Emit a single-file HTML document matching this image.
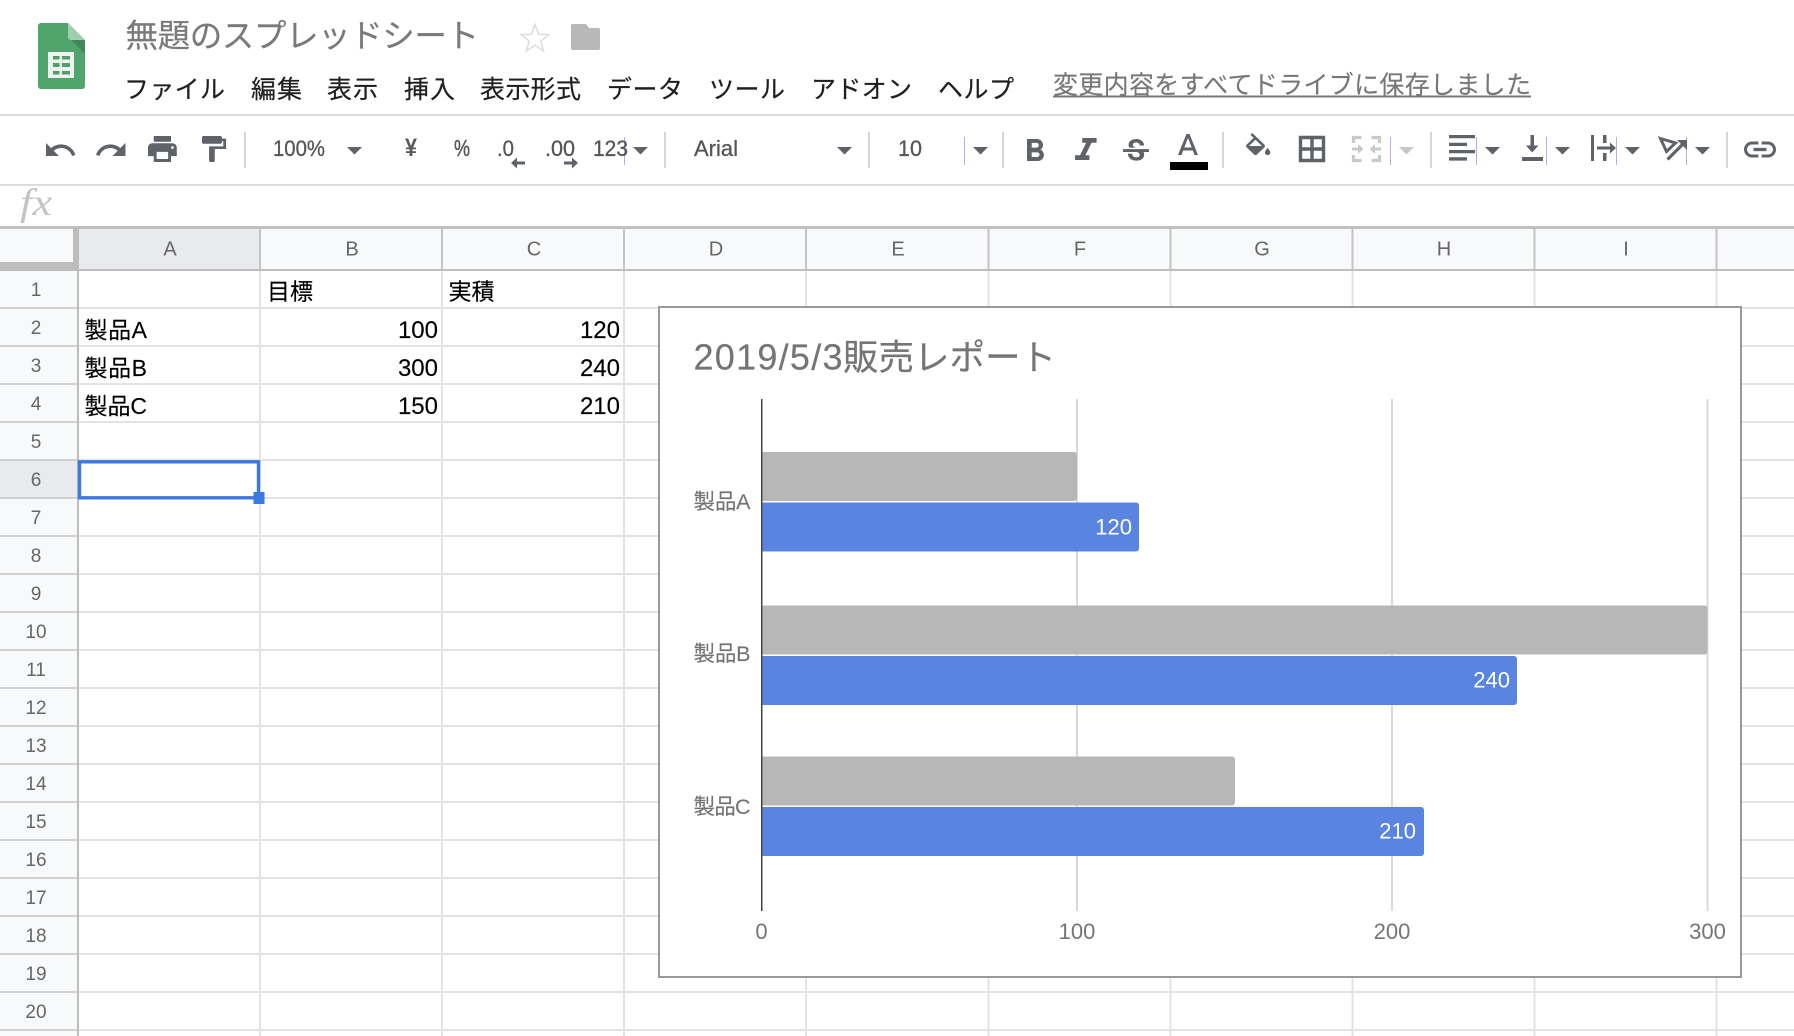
<!DOCTYPE html>
<html lang="ja">
<head>
<meta charset="utf-8">
<title>無題のスプレッドシート</title>
<style>
html,body{margin:0;padding:0;background:#fff;width:1794px;height:1036px;overflow:hidden}
svg{display:block;font-family:"Liberation Sans","Noto Sans CJK JP",sans-serif}
.m{font-size:25px;fill:#1f1f1f;stroke:#1f1f1f;stroke-width:.2px}
.t{font-size:22px;fill:#555;stroke:#555;stroke-width:.3px}
.c{font-size:20px;fill:#666;text-anchor:middle}
.r{font-size:19px;fill:#666;text-anchor:middle}
.d{font-size:23px;fill:#000;stroke:#000;stroke-width:.15px}
.n{font-size:24px;fill:#000;text-anchor:end;stroke:#000;stroke-width:.15px}
.l{font-size:21.5px;fill:#757575;stroke:#757575;stroke-width:.15px}
.a{font-size:22px;fill:#757575;text-anchor:middle}
.v{font-size:22px;fill:#fff;text-anchor:end}
.i{fill:#5f6368}
</style>
</head>
<body>
<svg xmlns="http://www.w3.org/2000/svg" width="1794" height="1036" viewBox="0 0 1794 1036">
<rect width="1794" height="1036" fill="#fff"/>

<!-- App icon -->
<path d="M41 23H68L85 40V86a3 3 0 0 1-3 3H41a3 3 0 0 1-3-3V26a3 3 0 0 1 3-3z" fill="#50a56c"/>
<path d="M68 37L85 54V40H71a3 3 0 0 1-3-3z" fill="#41875a"/>
<path d="M68 23L85 40H71a3 3 0 0 1-3-3z" fill="#9fcfae"/>
<rect x="48" y="52" width="26" height="26" fill="#eef3ef"/>
<path d="M53 56h6.500v3.500h-6.500zM62 56h8v3.500h-8zM53 63h6.500v4h-6.500zM62 63h8v4h-8zM53 71h6.500v3.500h-6.500zM62 71h8v3.500h-8z" fill="#4c9f68"/>

<!-- Title -->
<text x="125.500" y="47" font-size="32.500" fill="#7a7a7a" stroke="#7a7a7a" stroke-width=".2" textLength="353.500">無題のスプレッドシート</text>
<path d="M535 24.500l3.600 9.700 10.200.5-8 6.400 2.800 9.900-8.600-5.700-8.600 5.700 2.800-9.900-8-6.400 10.200-.5z" fill="#fff" stroke="#dcdcdc" stroke-width="1.500"/>
<path d="M573 24h13l3 4h9a2 2 0 0 1 2 2v18a2 2 0 0 1-2 2H573a2 2 0 0 1-2-2V26a2 2 0 0 1 2-2z" fill="#b8b8b8"/>

<!-- Menu -->
<text class="m" x="124" y="98" textLength="101">ファイル</text>
<text class="m" x="251" y="98" textLength="51">編集</text>
<text class="m" x="327" y="98" textLength="51">表示</text>
<text class="m" x="404" y="98" textLength="51">挿入</text>
<text class="m" x="480" y="98" textLength="101">表示形式</text>
<text class="m" x="607" y="98" textLength="76">データ</text>
<text class="m" x="709" y="98" textLength="76">ツール</text>
<text class="m" x="811" y="98" textLength="101">アドオン</text>
<text class="m" x="938" y="98" textLength="76">ヘルプ</text>
<text x="1053" y="93.500" font-size="25" fill="#777" stroke="#777" stroke-width=".15" textLength="478">変更内容をすべてドライブに保存しました</text>
<rect x="1053" y="95.500" width="478" height="2" fill="#777"/>

<!-- Bars -->
<rect x="0" y="114" width="1794" height="2" fill="#dadce0"/>
<rect x="0" y="184" width="1794" height="2" fill="#dadce0"/>

<!-- Toolbar separators -->
<path d="M245 132v36M665 132v36M869 132v36M1003 132v36M1223 132v36M1431 132v36M1727 132v36" stroke="#d6d6d9" stroke-width="2" fill="none"/>
<!-- purple hairlines -->
<path d="M624.500 137v28M964.500 137v28M1390.500 137v28M1476.500 137v28M1546.500 137v28M1616.500 137v28M1686.500 137v28" stroke="#c3a6ea" stroke-width="1" fill="none"/>

<!-- Undo / redo / print / paint -->
<path class="i" transform="translate(43.100 132.900) scale(1.44)" d="M12.500 8c-2.650 0-5.050.99-6.900 2.600L2 7v9h9l-3.620-3.620c1.390-1.160 3.160-1.880 5.120-1.880 3.540 0 6.550 2.310 7.600 5.500l2.370-.78C21.080 11.030 17.150 8 12.500 8z"/>
<path class="i" transform="translate(93.800 132.900) scale(1.44)" d="M18.400 10.600C16.550 8.990 14.150 8 11.500 8c-4.650 0-8.580 3.030-9.960 7.220L3.900 16c1.050-3.190 4.050-5.500 7.600-5.500 1.950 0 3.730.72 5.120 1.880L13 16h9V7l-3.600 3.600z"/>
<path class="i" transform="translate(145.100 131.700) scale(1.44)" d="M19 8H5c-1.660 0-3 1.340-3 3v6h4v4h12v-4h4v-6c0-1.660-1.340-3-3-3zm-3 11H8v-5h8v5zm3-7c-.55 0-1-.45-1-1s.45-1 1-1 1 .45 1 1-.45 1-1 1zm-1-9H6v4h12V3z"/>
<path class="i" transform="translate(196.300 133.400) scale(1.42 1.3)" d="M18 4V3c0-.55-.45-1-1-1H5c-.55 0-1 .45-1 1v4c0 .55.45 1 1 1h12c.55 0 1-.45 1-1V6h1v4H9v11c0 .55.45 1 1 1h2c.55 0 1-.45 1-1v-9h8V4h-3z"/>

<!-- Toolbar text -->
<text class="t" x="273" y="156" textLength="52" lengthAdjust="spacingAndGlyphs">100%</text>
<text x="405" y="156" font-size="25" font-weight="bold" fill="#5a5a5a" textLength="12" lengthAdjust="spacingAndGlyphs">¥</text>
<text x="454" y="156" font-size="23" fill="#5a5a5a" stroke="#5a5a5a" stroke-width=".5" textLength="16" lengthAdjust="spacingAndGlyphs">%</text>
<text class="t" x="497" y="156" textLength="17" lengthAdjust="spacingAndGlyphs">.0</text>
<text class="t" x="545" y="156" textLength="30" lengthAdjust="spacingAndGlyphs">.00</text>
<text class="t" x="593" y="156" textLength="35" lengthAdjust="spacingAndGlyphs">123</text>
<text class="t" x="694" y="156" textLength="44" lengthAdjust="spacingAndGlyphs">Arial</text>
<text class="t" x="898" y="156" textLength="24" lengthAdjust="spacingAndGlyphs">10</text>
<path class="i" d="M511 163l6-5.500v4h8v3h-8v4zM578 163l-6-5.500v4h-8v3h8v4z"/>

<!-- Dropdown arrows -->
<path class="i" d="M347 147h15l-7.500 7.500zM633 147h15l-7.500 7.500zM837 147h15l-7.500 7.500zM973 147h15l-7.500 7.500zM1485 147h15l-7.500 7.500zM1555 147h15l-7.500 7.500zM1625 147h15l-7.500 7.500zM1695 147h15l-7.500 7.500z"/>
<path d="M1399 147h15l-7.500 7.500z" fill="#c8c8c8"/>

<!-- B I S A -->
<path class="i" transform="translate(1016 132.700) scale(1.57)" d="M15.600 10.790c.97-.67 1.650-1.770 1.650-2.790 0-2.260-1.750-4-4-4H7v14h7.040c2.090 0 3.710-1.700 3.710-3.790 0-1.520-.86-2.820-2.150-3.420zM10 6.500h3c.83 0 1.500.67 1.500 1.500s-.67 1.500-1.500 1.500h-3v-3zm3.500 9H10v-3h3.500c.83 0 1.500.67 1.500 1.500s-.67 1.500-1.500 1.500z"/>
<path class="i" transform="translate(1064.200 131.700) scale(1.8 1.57)" d="M10 4v3h2.210l-3.420 8H6v3h8v-3h-2.210l3.420-8H18V4z"/>
<path class="i" transform="translate(1118.700 134.700) scale(1.44)" d="M6.850 7.080C6.850 4.370 9.450 3 12.240 3c1.640 0 3 .49 3.900 1.280.77.65 1.460 1.730 1.460 3.240h-3.010c0-.31-.05-.59-.15-.85-.29-.86-1.200-1.280-2.250-1.280-1.860 0-2.340 1.020-2.340 1.700 0 .48.25.88.74 1.210.38.25.77.48 1.410.7H7.390c-.21-.34-.54-.89-.54-1.920zM21 12v-2H3v2h9.620c1.150.45 1.960.75 1.960 1.970 0 1-.81 1.670-2.280 1.670-1.540 0-2.930-.54-2.930-2.510H6.400c0 .55.08 1.130.24 1.580.81 2.290 3.220 3.300 5.670 3.300 2.350 0 5.380-.92 5.380-4.340 0-.66-.13-1.300-.44-1.670H21z"/>
<path class="i" transform="translate(1169.500 129.500) scale(1.54 1.5)" d="M11 3L5.500 17h2.250l1.120-3h6.250l1.120 3h2.250L13 3h-2zm-1.380 9L12 5.670 14.380 12H9.620z"/>
<rect x="1170" y="162" width="38" height="8" fill="#000"/>

<!-- Fill -->
<path class="i" transform="translate(1242 133) scale(1.35 1.3)" d="M16.560 8.940L7.620 0 6.210 1.410l2.380 2.380-5.150 5.150c-.59.59-.59 1.540 0 2.120l5.500 5.500c.29.29.68.44 1.060.44s.77-.15 1.060-.44l5.500-5.500c.59-.58.59-1.530 0-2.120zM5.210 10L10 5.210 14.790 10H5.210zM19 11.500s-2 2.170-2 3.500c0 1.100.9 2 2 2s2-.9 2-2c0-1.330-2-3.500-2-3.500z"/>
<!-- Borders -->
<path d="M1300.500 137.500h23v23h-23zM1312 137.500v23M1300.500 149h23" fill="none" stroke="#5f6368" stroke-width="3.400"/>
<!-- Merge -->
<path d="M1353.500 143v-5.500h8M1379.500 143v-5.500h-8M1353.500 155v5.500h8M1379.500 155v5.500h-8" fill="none" stroke="#c9c9c9" stroke-width="3.200"/>
<path d="M1352 147.500h6v-3.500l5.500 5-5.500 5v-3.500h-6zM1381 147.500h-6v-3.500l-5.500 5 5.500 5v-3.500h6z" fill="#c9c9c9"/>
<!-- Align -->
<path class="i" d="M1449 135h26v3.300h-26zM1449 142.700h18v3.300h-18zM1449 150h26v3.300h-26zM1449 157.300h18v3.300h-18z"/>
<!-- V-align -->
<path class="i" d="M1530.500 135h3.500v10.500h4.500l-6.300 7-6.300-7h4.600zM1522 157h21v4h-21z"/>
<!-- Wrap -->
<path class="i" d="M1591 135h3v26h-3zM1603 135h3.500v8h-3.500zM1603 153h3.500v8h-3.500zM1597 146.500h13v-4l6 5.500-6 5.500v-4h-13z"/>
<!-- Rotate -->
<path d="M1660.500 138.500l15 4.500-9 8.500z" fill="none" stroke="#5f6368" stroke-width="3"/>
<path d="M1667.500 159.500l17-17" fill="none" stroke="#5f6368" stroke-width="3.200"/>
<path class="i" d="M1687 140v10l-3-3-4-4-3-3z"/>
<!-- Link -->
<path class="i" transform="translate(1740.800 130.300) scale(1.6)" d="M3.900 12c0-1.710 1.390-3.100 3.100-3.100h4V7H7c-2.760 0-5 2.240-5 5s2.240 5 5 5h4v-1.900H7c-1.710 0-3.100-1.390-3.100-3.100zM8 13h8v-2H8v2zm9-6h-4v1.900h4c1.710 0 3.100 1.390 3.100 3.100s-1.390 3.100-3.100 3.100h-4V17h4c2.760 0 5-2.240 5-5s-2.240-5-5-5z"/>

<!-- fx -->
<text x="20" y="215" font-family="'Liberation Serif',serif" font-style="italic" font-size="38" fill="#c4c4c4" textLength="32" lengthAdjust="spacingAndGlyphs">fx</text>

<!-- Header backgrounds -->
<rect x="0" y="228" width="1794" height="42" fill="#f8f9fa"/>
<rect x="0" y="270" width="78" height="766" fill="#f8f9fa"/>
<rect x="79" y="228" width="181" height="41" fill="#e8eaed"/>
<rect x="0" y="460" width="78" height="38" fill="#e8eaed"/>

<!-- Grid -->
<path d="M79 308H1794M79 346H1794M79 384H1794M79 422H1794M79 460H1794M79 498H1794M79 536H1794M79 574H1794M79 612H1794M79 650H1794M79 688H1794M79 726H1794M79 764H1794M79 802H1794M79 840H1794M79 878H1794M79 916H1794M79 954H1794M79 992H1794M79 1030H1794" stroke="#e2e3e3" stroke-width="2" fill="none"/>
<path d="M260 271V1036M442 271V1036M624 271V1036M806 271V1036M988.500 271V1036M1170.500 271V1036M1352.500 271V1036M1534.500 271V1036M1716.500 271V1036" stroke="#e2e3e3" stroke-width="2" fill="none"/>
<path d="M0 308H78M0 346H78M0 384H78M0 422H78M0 460H78M0 498H78M0 536H78M0 574H78M0 612H78M0 650H78M0 688H78M0 726H78M0 764H78M0 802H78M0 840H78M0 878H78M0 916H78M0 954H78M0 992H78M0 1030H78" stroke="#c4c4c4" stroke-width="1.500" fill="none"/>
<path d="M260 228V270M442 228V270M624 228V270M806 228V270M988.500 228V270M1170.500 228V270M1352.500 228V270M1534.500 228V270M1716.500 228V270" stroke="#c4c4c4" stroke-width="2" fill="none"/>
<rect x="0" y="226" width="1794" height="3" fill="#c0c0c0"/>
<rect x="78" y="269" width="1716" height="2" fill="#c0c0c0"/>
<rect x="77" y="271" width="2" height="765" fill="#bdbdbd"/>
<rect x="73" y="228" width="6" height="43" fill="#bdbdbd"/>
<rect x="0" y="262" width="79" height="9" fill="#bdbdbd"/>

<!-- Column letters -->
<text class="c" x="170" y="255.500">A</text>
<text class="c" x="352" y="255.500">B</text>
<text class="c" x="534" y="255.500">C</text>
<text class="c" x="716" y="255.500">D</text>
<text class="c" x="898" y="255.500">E</text>
<text class="c" x="1080" y="255.500">F</text>
<text class="c" x="1262" y="255.500">G</text>
<text class="c" x="1444" y="255.500">H</text>
<text class="c" x="1626" y="255.500">I</text>

<!-- Row numbers -->
<text class="r" x="36" y="296">1</text>
<text class="r" x="36" y="334">2</text>
<text class="r" x="36" y="372">3</text>
<text class="r" x="36" y="410">4</text>
<text class="r" x="36" y="448">5</text>
<text class="r" x="36" y="486">6</text>
<text class="r" x="36" y="524">7</text>
<text class="r" x="36" y="562">8</text>
<text class="r" x="36" y="600">9</text>
<text class="r" x="36" y="638">10</text>
<text class="r" x="36" y="676">11</text>
<text class="r" x="36" y="714">12</text>
<text class="r" x="36" y="752">13</text>
<text class="r" x="36" y="790">14</text>
<text class="r" x="36" y="828">15</text>
<text class="r" x="36" y="866">16</text>
<text class="r" x="36" y="904">17</text>
<text class="r" x="36" y="942">18</text>
<text class="r" x="36" y="980">19</text>
<text class="r" x="36" y="1018">20</text>

<!-- Cells -->
<text class="d" x="267" y="299.500">目標</text>
<text class="d" x="448.500" y="299.500">実積</text>
<text class="d" x="84.500" y="338" textLength="62.500">製品A</text>
<text class="d" x="84.500" y="376" textLength="62.500">製品B</text>
<text class="d" x="84.500" y="414" textLength="62.500">製品C</text>
<text class="n" x="438" y="338">100</text>
<text class="n" x="438" y="376">300</text>
<text class="n" x="438" y="414">150</text>
<text class="n" x="620" y="338">120</text>
<text class="n" x="620" y="376">240</text>
<text class="n" x="620" y="414">210</text>

<!-- Selection -->
<rect x="79.500" y="461.800" width="179" height="36" fill="none" stroke="#3b78e0" stroke-width="3.400"/>
<rect x="253.500" y="492" width="11" height="12" fill="#3b78e0"/>

<!-- Chart -->
<rect x="659" y="307" width="1082" height="670" fill="#fff" stroke="#9a9a9a" stroke-width="2"/>
<text x="693.500" y="369.500" font-size="36" fill="#757575" stroke="#757575" stroke-width=".2" textLength="149">2019/5/3</text>
<text x="843" y="369.500" font-size="35.500" fill="#757575" stroke="#757575" stroke-width=".2" textLength="213">販売レポート</text>
<path d="M1077 399V911M1392 399V911M1707.500 399V911" stroke="#d9d9d9" stroke-width="2" fill="none"/>
<path d="M762 452h312a3 3 0 0 1 3 3v43a3 3 0 0 1-3 3H762z" fill="#b7b7b7"/>
<path d="M762 502.500h374a3 3 0 0 1 3 3v43a3 3 0 0 1-3 3H762z" fill="#5985e1"/>
<path d="M762 605.500h942.500a3 3 0 0 1 3 3v43a3 3 0 0 1-3 3H762z" fill="#b7b7b7"/>
<path d="M762 656h752a3 3 0 0 1 3 3v43a3 3 0 0 1-3 3H762z" fill="#5985e1"/>
<path d="M762 756.500h470a3 3 0 0 1 3 3v43a3 3 0 0 1-3 3H762z" fill="#b7b7b7"/>
<path d="M762 807h659a3 3 0 0 1 3 3v43a3 3 0 0 1-3 3H762z" fill="#5985e1"/>
<rect x="761" y="399" width="1.500" height="512" fill="#444"/>
<text class="l" x="693.500" y="509" textLength="57">製品A</text>
<text class="l" x="693.500" y="661" textLength="57">製品B</text>
<text class="l" x="693.500" y="814" textLength="57">製品C</text>
<text class="v" x="1132" y="534.500">120</text>
<text class="v" x="1510" y="687.500">240</text>
<text class="v" x="1416" y="838.500">210</text>
<text class="a" x="761.500" y="939">0</text>
<text class="a" x="1077" y="939">100</text>
<text class="a" x="1392" y="939">200</text>
<text class="a" x="1707.500" y="939">300</text>
</svg>
</body>
</html>
